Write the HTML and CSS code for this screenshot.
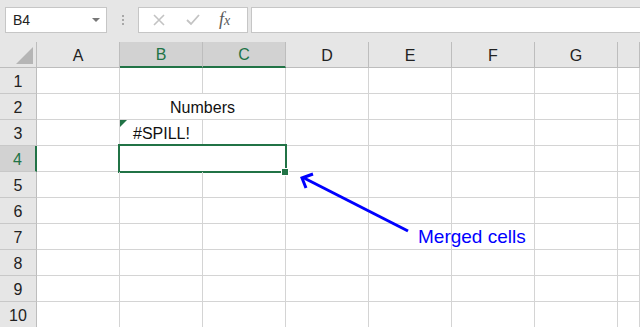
FILE: index.html
```html
<!DOCTYPE html>
<html lang="en">
<head>
    <meta charset="UTF-8">
    <title>Merged cells</title>
    <link rel="stylesheet" href="styles.css">
</head>
<body>
    <div class="barra">
        <div class="caixa-nome">
            <span>B4</span>
            <span class="seta-nome"></span>
        </div>
        <div class="pontos"><i></i><i></i><i></i></div>
        <div class="botoes-formula">
            <svg width="12" height="12" viewBox="0 0 12 12"><path d="M1 1L11 11M11 1L1 11" stroke="#c3c3c3" stroke-width="1.6" fill="none"/></svg>
            <svg width="14" height="12" viewBox="0 0 14 12"><path d="M1 6L5 10L13 1" stroke="#c3c3c3" stroke-width="1.8" fill="none"/></svg>
            <span class="fx">f<small>x</small></span>
        </div>
        <div class="formula"></div>
    </div>

    <div class="planilha">
        <div class="linha cabecalho">
            <div class="canto"><span class="triangulo"></span></div>
            <div class="col">A</div>
            <div class="col sel">B</div>
            <div class="col sel">C</div>
            <div class="col">D</div>
            <div class="col">E</div>
            <div class="col">F</div>
            <div class="col">G</div>
            <div class="col"></div>
        </div>
        <div class="linha">
            <div class="rh">1</div>
            <div class="c"></div><div class="c"></div><div class="c"></div><div class="c"></div>
            <div class="c"></div><div class="c"></div><div class="c"></div><div class="c"></div>
        </div>
        <div class="linha">
            <div class="rh">2</div>
            <div class="c"></div>
            <div class="c dupla centro">Numbers</div>
            <div class="c"></div><div class="c"></div><div class="c"></div><div class="c"></div><div class="c"></div>
        </div>
        <div class="linha">
            <div class="rh">3</div>
            <div class="c"></div>
            <div class="c spill"><span class="erro"></span>#SPILL!</div>
            <div class="c"></div>
            <div class="c"></div><div class="c"></div><div class="c"></div><div class="c"></div><div class="c"></div>
        </div>
        <div class="linha">
            <div class="rh ativa">4</div>
            <div class="c"></div>
            <div class="c dupla selecionada"><span class="alca"></span></div>
            <div class="c"></div><div class="c"></div><div class="c"></div><div class="c"></div><div class="c"></div>
        </div>
        <div class="linha">
            <div class="rh">5</div>
            <div class="c"></div><div class="c"></div><div class="c"></div><div class="c"></div>
            <div class="c"></div><div class="c"></div><div class="c"></div><div class="c"></div>
        </div>
        <div class="linha">
            <div class="rh">6</div>
            <div class="c"></div><div class="c"></div><div class="c"></div><div class="c"></div>
            <div class="c"></div><div class="c"></div><div class="c"></div><div class="c"></div>
        </div>
        <div class="linha">
            <div class="rh">7</div>
            <div class="c"></div><div class="c"></div><div class="c"></div><div class="c"></div>
            <div class="c"></div><div class="c"></div><div class="c"></div><div class="c"></div>
        </div>
        <div class="linha">
            <div class="rh">8</div>
            <div class="c"></div><div class="c"></div><div class="c"></div><div class="c"></div>
            <div class="c"></div><div class="c"></div><div class="c"></div><div class="c"></div>
        </div>
        <div class="linha">
            <div class="rh">9</div>
            <div class="c"></div><div class="c"></div><div class="c"></div><div class="c"></div>
            <div class="c"></div><div class="c"></div><div class="c"></div><div class="c"></div>
        </div>
        <div class="linha">
            <div class="rh">10</div>
            <div class="c"></div><div class="c"></div><div class="c"></div><div class="c"></div>
            <div class="c"></div><div class="c"></div><div class="c"></div><div class="c"></div>
        </div>

        <!-- anotação por cima da grade -->
        <svg class="seta" width="640" height="327" viewBox="0 0 640 327">
            <line x1="408" y1="231" x2="304" y2="178" stroke="#0000ff" stroke-width="3"/>
            <polyline points="313,174 302,178 306,188" stroke="#0000ff" stroke-width="3" fill="none"/>
        </svg>
        <div class="rotulo">Merged cells</div>
    </div>
</body>
</html>
```

FILE: styles.css
```css
body {
    margin: 0;
    width: 640px;
    height: 327px;
    overflow: hidden;
    background-color: #ffffff;
    font-family: "Liberation Sans", Arial, sans-serif;
}
.barra {
    height: 42px;
    background-color: #e6e6e6;
    display: flex;
    align-items: flex-start;
    padding-top: 7px;
    padding-left: 5px;
    box-sizing: border-box;
}
.caixa-nome {
    width: 102px;
    height: 26px;
    box-sizing: border-box;
    border: 1px solid #c6c6c6;
    background-color: #fff;
    display: flex;
    align-items: center;
    justify-content: space-between;
    padding: 0 6px 0 7px;
    font-size: 14px;
    color: #222;
}
.seta-nome {
    width: 0;
    height: 0;
    border-left: 4px solid transparent;
    border-right: 4px solid transparent;
    border-top: 4px solid #777;
}
.pontos {
    width: 31px;
    height: 26px;
    display: flex;
    flex-direction: column;
    align-items: center;
    justify-content: center;
    gap: 2px;
}
.pontos i {
    width: 2px;
    height: 2px;
    background-color: #a8a8a8;
}
.botoes-formula {
    width: 110px;
    height: 26px;
    box-sizing: border-box;
    border: 1px solid #c6c6c6;
    background-color: #fff;
    display: flex;
    align-items: center;
    padding-left: 14px;
    gap: 21px;
}
.fx {
    font-family: "Liberation Serif", serif;
    font-style: italic;
    font-size: 18px;
    color: #5a5a5a;
    margin-left: -2px;
    padding-bottom: 2px;
}
.fx small {
    font-size: 14px;
}
.formula {
    flex: 1;
    height: 26px;
    margin-left: 3px;
    box-sizing: border-box;
    border: 1px solid #c6c6c6;
    border-right: none;
    background-color: #fff;
}
.planilha {
    position: relative;
}
.linha {
    display: grid;
    grid-template-columns: 37px repeat(7, 83px) 1fr;
    height: 26px;
}
.cabecalho {
    background-color: #e6e6e6;
}
.canto {
    border-right: 1px solid #bdbdbd;
    border-bottom: 1px solid #bdbdbd;
    position: relative;
}
.triangulo {
    position: absolute;
    right: 3px;
    bottom: 3px;
    width: 0;
    height: 0;
    border-left: 17px solid transparent;
    border-bottom: 17px solid #b5b5b5;
}
.col {
    box-sizing: border-box;
    border-right: 1px solid #bdbdbd;
    border-bottom: 1px solid #bdbdbd;
    display: flex;
    align-items: center;
    justify-content: center;
    font-size: 16px;
    color: #222;
    padding-top: 2px;
}
.col.sel {
    background-color: #d2d2d2;
    color: #217346;
    border-bottom: 2px solid #217346;
}
.rh {
    box-sizing: border-box;
    background-color: #e6e6e6;
    border-right: 1px solid #bdbdbd;
    border-bottom: 1px solid #c8c8c8;
    display: flex;
    align-items: center;
    justify-content: center;
    font-size: 16px;
    color: #222;
    padding-top: 2px;
}
.rh.ativa {
    background-color: #d2d2d2;
    color: #217346;
    border-right: 2px solid #217346;
}
.c {
    box-sizing: border-box;
    border-right: 1px solid #d4d4d4;
    border-bottom: 1px solid #d4d4d4;
    font-size: 16px;
    color: #111;
    display: flex;
    align-items: center;
    padding-top: 2px;
    position: relative;
}
.dupla {
    grid-column: span 2;
}
.centro {
    justify-content: center;
}
.spill {
    padding-left: 13px;
}
.erro {
    position: absolute;
    left: 0;
    top: 0;
    width: 0;
    height: 0;
    border-top: 7px solid #217346;
    border-right: 7px solid transparent;
}
.selecionada::after {
    content: "";
    position: absolute;
    left: -2px;
    top: -2px;
    right: -2px;
    bottom: -2px;
    border: 2px solid #217346;
}
.alca {
    position: absolute;
    right: -4px;
    bottom: -5px;
    width: 6px;
    height: 6px;
    background-color: #217346;
    border: 1px solid #fff;
    z-index: 1;
}
.seta {
    position: absolute;
    left: 0;
    top: -42px;
    pointer-events: none;
}
.rotulo {
    position: absolute;
    left: 418px;
    top: 184px;
    font-size: 19px;
    color: #0000ff;
}
```
